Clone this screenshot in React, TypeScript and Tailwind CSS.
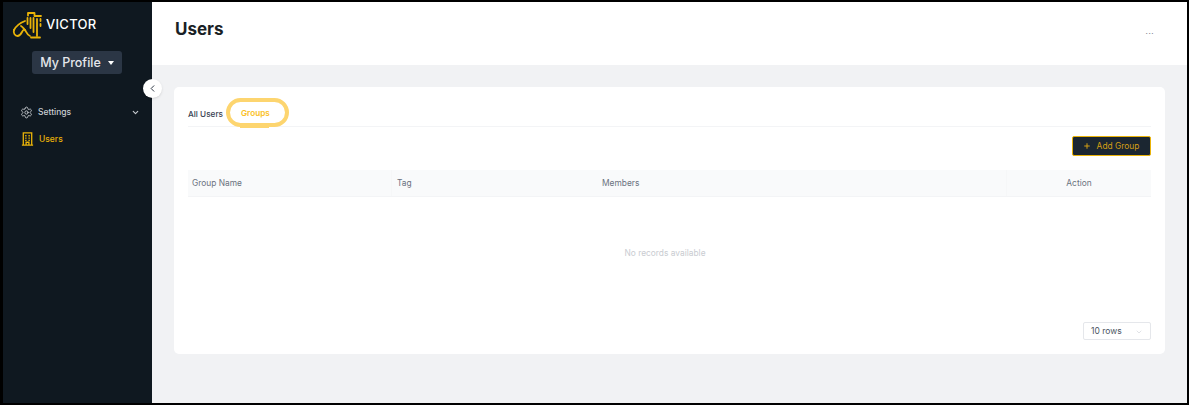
import React from "react";
import { ChevronDown, ChevronLeft, Plus, Settings } from "lucide-react";

const Logo = () => (
  <svg width="30" height="28" viewBox="0 0 30 28" fill="none" stroke="#eab308" strokeWidth="1.8" strokeLinecap="round" strokeLinejoin="round">
    <path d="M2 19C4 15 8 12 13 10" />
    <path d="M2 19c-1 3 1 6 3.500 6S9 23 10 21s2-3 3-2 2 5 5 6" />
    <path d="M9 15c2 1 3 3 4 4" />
    <path d="M15.500 7v6M18.500 7v10M21.500 7v14M25 8v17" />
    <path d="M16 4.500V2h6.500v3H29" />
    <path d="M28.500 8v2M28.500 13v2" />
    <path d="M19 26.500h9" />
  </svg>
);

const Building = () => (
  <svg width="13" height="14" viewBox="0 0 13 15" fill="none" stroke="#eab308" strokeWidth="1.4">
    <path d="M2 14V1h9v13M0.500 14h12" />
    <path d="M4 4h1.500M7.500 4h1.500M4 6.500h1.500M7.500 6.500h1.500M4 9h1.500M7.500 9h1.500M5 14v-3h3v3" />
  </svg>
);

const App: React.FC = () => {
  return (
    <div className="h-[405px] w-[1189px] overflow-hidden border-y-2 border-l-[3px] border-r-2 border-black bg-[#f1f2f4] font-['Inter',sans-serif]">
      <div className="flex h-full">
        {/* Sidebar */}
        <aside className="relative w-[149px] shrink-0 bg-[#0f1820]">
          <div className="flex items-center pl-[9px] pt-[9px]">
            <Logo />
            <span className="ml-[4px] text-[13px] font-medium tracking-[0.3px] text-white">VICTOR</span>
          </div>
          <div className="mt-[12px] flex justify-center pr-[1px]">
            <button className="flex h-[23px] w-[90px] items-center justify-center gap-[7px] rounded-[3px] bg-[#2b3645] pt-[1px] text-[12.5px] font-medium text-[#e5e7eb]">
              My Profile
              <span className="h-0 w-0 border-x-[3.5px] border-t-[4px] border-x-transparent border-t-white" />
            </button>
          </div>
          <nav className="mt-[32px]">
            <div className="flex items-center pl-[17px] pr-[12px]">
              <Settings className="h-[13px] w-[13px] text-[#c4c8cd]" strokeWidth={1.7} />
              <span className="ml-[5px] text-[8.5px] font-medium text-[#c9cdd2]">Settings</span>
              <ChevronDown className="ml-auto h-[9px] w-[9px] text-[#c9cdd2]" strokeWidth={3} />
            </div>
            <div className="mt-[13px] flex items-center pl-[18px]">
              <Building />
              <span className="ml-[5px] text-[8.5px] font-medium text-[#eab308]">Users</span>
            </div>
          </nav>
          <button className="absolute right-[-10px] top-[77px] flex h-[19px] w-[19px] items-center justify-center rounded-full bg-white shadow-sm">
            <ChevronLeft className="h-[11px] w-[11px] text-[#1f2937]" strokeWidth={2} />
          </button>
        </aside>

        {/* Main */}
        <main className="min-w-0 flex-1">
          <header className="flex h-[63px] items-start justify-between bg-white pl-[23px] pr-[33px]">
            <h1 className="mt-[15px] text-[17px] font-bold leading-[24px] text-[#1a1f26]">Users</h1>
            <span className="mt-[24px] text-[8px] leading-[10px] tracking-[0.5px] text-[#6b7280]">...</span>
          </header>
          <div className="px-[22px] pt-[22px]">
            <section className="h-[267px] rounded-[5px] bg-white px-[14px]">
              <div className="flex h-[40px] items-center border-b border-[#f3f4f6] pt-[15px]">
                <span className="text-[8.2px] font-medium text-[#374151]">All Users</span>
                <span className="relative ml-[3px] mt-[-4px] flex h-[29px] w-[63px] items-center rounded-full border-[4px] border-[#fdd56f] pl-[11px] pt-[2px] text-[8.2px] font-semibold text-[#fbbf24]">
                  Groups
                  <span className="absolute bottom-[-5px] left-[10px] h-[1px] w-[29px] bg-[#fdd56f]" />
                </span>
              </div>
              <div className="mt-[9px] flex justify-end">
                <button className="flex h-[20px] w-[79px] items-center justify-center gap-[6px] rounded-[2px] border border-[#eab308] bg-[#1b2631] pr-[1px] text-[8.4px] text-[#d49f14]">
                  <Plus className="h-[8px] w-[8px]" strokeWidth={3} />
                  Add Group
                </button>
              </div>
              <div className="mt-[14px] flex h-[27px] items-stretch border-b border-[#f3f4f6] bg-[#f9fafb] text-[8.4px] text-[#6b7280]">
                <span className="flex w-[204px] items-center border-r border-[#f6f7f8] pl-[4px]">Group Name</span>
                <span className="flex w-[205px] items-center pl-[5px]">Tag</span>
                <span className="flex flex-1 items-center border-r border-[#f6f7f8] pl-[5px]">Members</span>
                <span className="flex w-[144px] items-center justify-center">Action</span>
              </div>
              <p className="mt-[50px] pr-[9px] text-center text-[8.4px] leading-[12px] text-[#c9ccd1]">No records available</p>
              <div className="mt-[63px] flex justify-end">
                <div className="flex h-[18px] w-[68px] items-center justify-between rounded-[2px] border border-[#e5e7eb] px-[7px] pt-[1px] text-[8.5px] text-[#4b5563]">
                  10 rows
                  <ChevronDown className="h-[8px] w-[8px] text-[#d1d5db]" />
                </div>
              </div>
            </section>
          </div>
        </main>
      </div>
    </div>
  );
};

export default App;
